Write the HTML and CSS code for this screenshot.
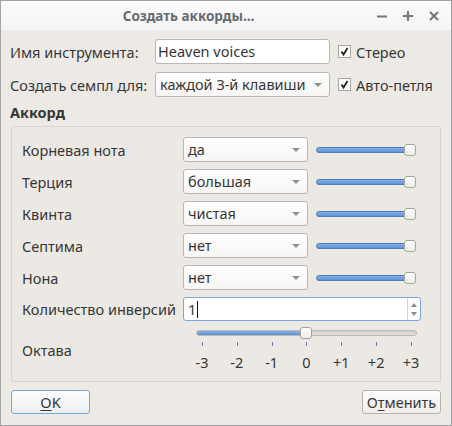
FILE: index.html
```html
<!DOCTYPE html>
<html lang="ru">
<head>
<meta charset="utf-8">
<link rel="stylesheet" href="styles.css">
</head>
<body>
<div class="window">
  <div class="titlebar">
    <div class="title">Создать аккорды...</div>
    <div class="controls">
      <svg class="ctl" width="12" height="12" viewBox="0 0 12 12"><path d="M1 6.5H11" stroke="#767676" stroke-width="2"/></svg>
      <svg class="ctl" width="12" height="12" viewBox="0 0 12 12"><path d="M1 6H11M6 1V11" stroke="#767676" stroke-width="2"/></svg>
      <svg class="ctl" width="12" height="12" viewBox="0 0 12 12"><path d="M2 2L10 10M10 2L2 10" stroke="#767676" stroke-width="2"/></svg>
    </div>
  </div>
  <div class="body">
    <div class="top-grid">
      <div class="label">Имя инструмента:</div>
      <div class="input">Heaven voices</div>
      <div class="check"><span class="box"><svg width="11" height="11" viewBox="0 0 11 11"><path d="M2.5 5.5L4.5 8.5L8.5 2" fill="none" stroke="#222" stroke-width="1.8"/></svg></span><span>Стерео</span></div>
      <div class="label">Создать семпл для:</div>
      <div class="combo combo-top"><span>каждой 3-й клавиши</span><span class="arrow"></span></div>
      <div class="check"><span class="box"><svg width="11" height="11" viewBox="0 0 11 11"><path d="M2.5 5.5L4.5 8.5L8.5 2" fill="none" stroke="#222" stroke-width="1.8"/></svg></span><span>Авто-петля</span></div>
    </div>
    <div class="section-title">Аккорд</div>
    <div class="group">
      <div class="group-grid">
        <div class="label">Корневая нота</div>
        <div class="combo"><span>да</span><span class="arrow"></span></div>
        <div class="mini-slider"><div class="groove"></div><div class="handle"></div></div>

        <div class="label">Терция</div>
        <div class="combo"><span>большая</span><span class="arrow"></span></div>
        <div class="mini-slider"><div class="groove"></div><div class="handle"></div></div>

        <div class="label">Квинта</div>
        <div class="combo"><span>чистая</span><span class="arrow"></span></div>
        <div class="mini-slider"><div class="groove"></div><div class="handle"></div></div>

        <div class="label">Септима</div>
        <div class="combo"><span>нет</span><span class="arrow"></span></div>
        <div class="mini-slider"><div class="groove"></div><div class="handle"></div></div>

        <div class="label">Нона</div>
        <div class="combo"><span>нет</span><span class="arrow"></span></div>
        <div class="mini-slider"><div class="groove"></div><div class="handle"></div></div>

        <div class="label">Количество инверсий</div>
        <div class="spin">
          <div class="spin-text">1<span class="caret"></span></div>
          <div class="spin-btns"><span class="up"></span><span class="down"></span></div>
        </div>
      </div>
      <div class="octave-row">
        <div class="label octave-label">Октава</div>
        <div class="octave">
          <div class="oct-slider">
            <div class="oct-groove"><div class="oct-fill"></div></div>
            <div class="oct-handle"></div>
          </div>
          <div class="ticks"><i></i><i></i><i></i><i></i><i></i><i></i><i></i></div>
          <div class="tick-labels"><span>-3</span><span>-2</span><span>-1</span><span>0</span><span>+1</span><span>+2</span><span>+3</span></div>
        </div>
      </div>
    </div>
    <div class="buttons">
      <div class="btn btn-default"><u>O</u>K</div>
      <div class="btn">О<u>т</u>менить</div>
    </div>
  </div>
</div>
</body>
</html>
```

FILE: styles.css
```css
* { box-sizing: border-box; }
html, body { margin: 0; padding: 0; }
body {
  font-family: "Noto Sans", "DejaVu Sans", sans-serif;
  font-size: 14.5px;
  color: #363636;
  background: #edeae6;
}
.window {
  width: 452px;
  height: 426px;
  border: 1px solid #a4a4a4;
  background: #edeae6;
  display: flex;
  flex-direction: column;
}
.titlebar {
  height: 29px;
  flex: none;
  display: flex;
  align-items: center;
  background: linear-gradient(#fbfbfb, #f5f5f5);
}
.title {
  flex: 1;
  text-align: center;
  font-weight: bold;
  font-size: 13.5px;
  color: #666b72;
  padding-left: 1px;
}
.controls {
  width: 76px;
  display: flex;
  align-items: center;
  gap: 14px;
  padding-left: 1px;
}
.ctl { display: block; }
.body {
  flex: 1;
  padding: 9px 9px 0 9px;
  display: flex;
  flex-direction: column;
}
.label { line-height: 18px; white-space: nowrap; }
.top-grid {
  display: grid;
  grid-template-columns: 145px 175px auto;
  grid-auto-rows: 25px;
  row-gap: 8px;
  align-items: center;
}
.input {
  height: 25px;
  background: #fff;
  border: 1px solid #bcb7b1;
  border-radius: 3px;
  padding-left: 2px;
  line-height: 23px;
}
.check {
  display: flex;
  align-items: center;
  margin-left: 8px;
  gap: 5px;
}
.box {
  width: 13px;
  height: 13px;
  border: 1px solid #a9a5a0;
  background: #fff;
  display: block;
}
.box svg { display: block; }
.combo {
  height: 25px;
  background: linear-gradient(#ffffff, #f7f6f5);
  border: 1px solid #bcb7b1;
  border-radius: 3px;
  display: flex;
  align-items: center;
  justify-content: space-between;
  padding: 0 7px 0 4px;
  line-height: 23px;
  white-space: nowrap;
}
.arrow {
  width: 0; height: 0;
  flex: none;
  border-left: 4px solid transparent;
  border-right: 4px solid transparent;
  border-top: 4px solid #8e8e8e;
}
.section-title {
  font-weight: bold;
  line-height: 18px;
  margin-top: 6px;
  margin-bottom: 5px;
}
.group {
  margin: 0 1px;
  border: 1px solid #d7d3ce;
  border-radius: 2px;
  background: #ece9e5;
  padding: 10px 10px 10px 10px;
}
.group-grid {
  display: grid;
  grid-template-columns: 153px 125px 105px;
  column-gap: 8px;
  grid-template-rows: repeat(5, 25px) 24px;
  row-gap: 7px;
  align-items: center;
}
.mini-slider {
  position: relative;
  width: 100px;
  height: 12px;
}
.groove {
  position: absolute;
  left: 0; right: 4px;
  top: 3px;
  height: 6px;
  background: linear-gradient(#86b2e6, #5d91d3);
  border: 1px solid #4a7cba;
  border-radius: 3px;
}
.handle, .oct-handle {
  position: absolute;
  top: 0;
  width: 12px;
  height: 12px;
  border: 1px solid #a8a39d;
  border-radius: 3px;
  background: linear-gradient(#ffffff, #eeedeb);
}
.handle { right: 0; }
.spin {
  grid-column: 2 / 4;
  height: 24px;
  background: #fff;
  border: 1px solid #7ba7df;
  border-radius: 3px;
  display: flex;
}
.spin-text {
  flex: 1;
  padding-left: 4px;
  line-height: 22px;
  display: flex;
  align-items: center;
}
.caret {
  display: inline-block;
  width: 1px;
  height: 17px;
  background: #111;
  margin-left: 1px;
}
.spin-btns {
  width: 13px;
  border-left: 1px solid #d2d2d2;
  display: flex;
  flex-direction: column;
  align-items: center;
  justify-content: center;
  gap: 5px;
}
.up, .down {
  width: 0; height: 0;
  border-left: 3.5px solid transparent;
  border-right: 3.5px solid transparent;
}
.up { border-bottom: 4px solid #8c8c8c; }
.down { border-top: 4px solid #8c8c8c; }
.octave-row {
  display: flex;
  align-items: center;
  margin-top: 6px;
}
.octave-label { width: 161px; padding-top: 2px; }
.octave {
  margin-left: 13px;
  width: 221px;
}
.oct-slider {
  position: relative;
  height: 12px;
}
.oct-groove {
  position: absolute;
  left: 0; right: 0;
  top: 3px;
  height: 6px;
  background: linear-gradient(#d3d0cc, #e2dfdb);
  border: 1px solid #bcb8b3;
  border-radius: 3px;
  overflow: hidden;
}
.oct-fill {
  width: 108px;
  height: 100%;
  background: linear-gradient(#86b2e6, #5d91d3);
  border-right: 1px solid #4a7cba;
}
.oct-handle { left: 104px; }
.ticks {
  margin-top: 3px;
  height: 4px;
  display: flex;
  justify-content: space-between;
  padding: 0 5px 0 6px;
}
.ticks i {
  display: block;
  width: 1px;
  height: 4px;
  background: #5a7fae;
}
.tick-labels {
  margin: 8px -6px 0 -6px;
  display: flex;
  justify-content: space-between;
  line-height: 17px;
}
.tick-labels span {
  width: 24px;
  text-align: center;
}
.buttons {
  display: flex;
  justify-content: space-between;
  margin: 8px 1px 0 1px;
}
.btn {
  width: 79px;
  height: 24px;
  border: 1px solid #b7b2ac;
  border-radius: 3px;
  background: linear-gradient(#fcfcfc, #efeeed);
  text-align: center;
  line-height: 22px;
}
.btn-default {
  border-color: #7aa6df;
  background: linear-gradient(#fdfdfd, #eceef1);
}
.btn u { text-decoration-thickness: 1px; text-underline-offset: 2px; }
```
